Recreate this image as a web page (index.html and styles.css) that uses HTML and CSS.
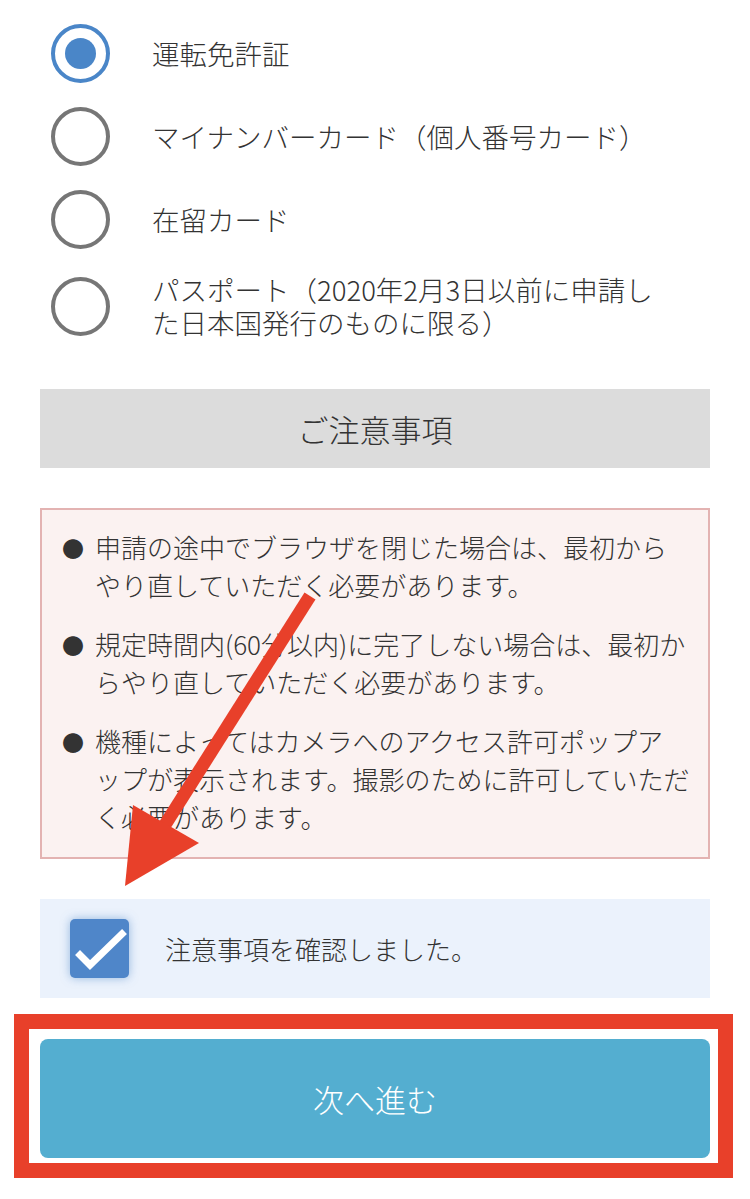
FILE: index.html
```html
<!DOCTYPE html>
<html lang="ja">
<head>
<meta charset="utf-8">
<link rel="stylesheet" href="styles.css">
</head>
<body>
<div class="page">
  <ul class="radios">
    <li class="radio-row">
      <span class="radio checked"><span class="dot"></span></span>
      <span class="radio-label">運転免許証</span>
    </li>
    <li class="radio-row">
      <span class="radio"></span>
      <span class="radio-label">マイナンバーカード（個人番号カード）</span>
    </li>
    <li class="radio-row">
      <span class="radio"></span>
      <span class="radio-label">在留カード</span>
    </li>
    <li class="radio-row">
      <span class="radio"></span>
      <span class="radio-label">パスポート（2020年2月3日以前に申請し<br>た日本国発行のものに限る）</span>
    </li>
  </ul>

  <h2 class="section-title">ご注意事項</h2>

  <div class="notice">
    <div class="notice-item">
      <span class="bullet">●</span>
      <p>申請の途中でブラウザを閉じた場合は、最初から<br>やり直していただく必要があります。</p>
    </div>
    <div class="notice-item">
      <span class="bullet">●</span>
      <p>規定時間内(60分以内)に完了しない場合は、最初か<br>らやり直していただく必要があります。</p>
    </div>
    <div class="notice-item">
      <span class="bullet">●</span>
      <p>機種によってはカメラへのアクセス許可ポップア<br>ップが表示されます。撮影のために許可していただ<br>く必要があります。</p>
    </div>
  </div>

  <label class="confirm">
    <span class="checkbox">
      <svg width="59" height="59" viewBox="0 0 59 59"><polyline points="10,36 20,46 52,15" fill="none" stroke="#fff" stroke-width="7" stroke-linecap="square" stroke-linejoin="miter"/></svg>
    </span>
    <span class="confirm-text">注意事項を確認しました。</span>
  </label>

  <div class="highlight">
    <button class="next-btn">次へ進む</button>
  </div>
</div>

<svg class="arrow" width="750" height="1199" viewBox="0 0 750 1199">
  <line x1="310" y1="596" x2="163" y2="828" stroke="#e8402a" stroke-width="13"/>
  <polygon points="125,886 133,805 199,843" fill="#e8402a"/>
</svg>
</body>
</html>
```

FILE: styles.css
```css
* { box-sizing: border-box; }

html, body {
  margin: 0;
  padding: 0;
  background: #ffffff;
}

body {
  position: relative;
  width: 750px;
  height: 1199px;
  overflow: hidden;
  font-family: "Noto Sans CJK JP", "Noto Sans", sans-serif;
  font-weight: 300;
  color: #333333;
}

.page {
  padding: 24px 40px 0 40px;
}

.radios {
  list-style: none;
  margin: 0;
  padding: 0;
  display: flex;
  flex-direction: column;
  gap: 24px;
}

.radio-row {
  display: flex;
  align-items: center;
  min-height: 58px;
}

.radio {
  flex: none;
  width: 59px;
  height: 59px;
  margin-left: 11px;
  margin-right: 42px;
  border: 4px solid #767676;
  border-radius: 50%;
  display: flex;
  align-items: center;
  justify-content: center;
}

.radio.checked {
  border-color: #4a86c8;
}

.radio .dot {
  width: 31px;
  height: 31px;
  border-radius: 50%;
  background: #4a86c8;
}

.radio-label {
  font-size: 27.5px;
  line-height: 33px;
  color: #333;
}

.section-title {
  margin: 50px 0 0 0;
  height: 79px;
  background: #dcdcdc;
  font-size: 31px;
  font-weight: 300;
  display: flex;
  align-items: center;
  justify-content: center;
  color: #333;
}

.notice {
  margin-top: 40px;
  background: #fbf2f1;
  border: 2px solid #e3b3b2;
  padding: 18px 10px 21px 20px;
  display: flex;
  flex-direction: column;
  gap: 21px;
}

.notice-item {
  display: flex;
  align-items: flex-start;
}

.bullet {
  flex: none;
  width: 33px;
  font-size: 22px;
  line-height: 38px;
  color: #333;
}

.notice-item p {
  margin: 0;
  font-size: 26px;
  line-height: 38px;
  white-space: nowrap;
}

.confirm {
  margin-top: 40px;
  height: 99px;
  background: #ebf2fc;
  display: flex;
  align-items: center;
  padding-left: 30px;
}

.checkbox {
  flex: none;
  width: 59px;
  height: 59px;
  border-radius: 5px;
  background: #4f86c9;
  box-shadow: 0 0 10px rgba(79, 134, 201, 0.55);
  display: block;
}

.checkbox svg { display: block; }

.confirm-text {
  margin-left: 36px;
  font-size: 26px;
  color: #333;
}

.highlight {
  margin: 16px -23px 0 -26px;
  border: 15px solid #e8402a;
  padding: 10px 8px 5px 11px;
  background: #fff;
}

.next-btn {
  display: flex;
  align-items: center;
  justify-content: center;
  width: 100%;
  height: 119px;
  border: none;
  border-radius: 8px;
  background: #54aed0;
  color: #ffffff;
  font-family: "Noto Sans CJK JP", "Noto Sans", sans-serif;
  font-weight: 300;
  font-size: 31px;
  padding: 0;
}

.arrow {
  position: absolute;
  left: 0;
  top: 0;
  pointer-events: none;
}
```
